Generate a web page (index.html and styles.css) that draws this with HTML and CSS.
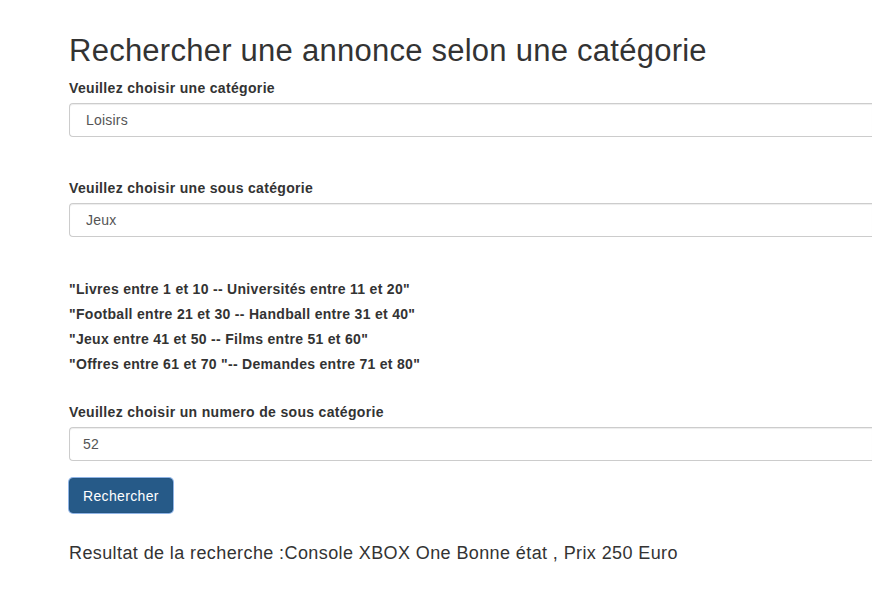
FILE: index.html
```html
<!DOCTYPE html>
<html lang="fr">
<head>
<meta charset="utf-8">
<title>Rechercher une annonce</title>
<link rel="stylesheet" href="styles.css">
</head>
<body>
<main class="page">
  <h2 class="title">Rechercher une annonce selon une catégorie</h2>
  <form class="search-form">
    <div class="group">
      <label class="field-label" for="cat">Veuillez choisir une catégorie</label>
      <select class="control control-select" id="cat">
        <option>Loisirs</option>
      </select>
    </div>
    <div class="group group-sub">
      <label class="field-label" for="subcat">Veuillez choisir une sous catégorie</label>
      <select class="control control-select" id="subcat">
        <option>Jeux</option>
      </select>
    </div>
    <div class="ranges">
      <p>"Livres entre 1 et 10 -- Universités entre 11 et 20"</p>
      <p>"Football entre 21 et 30 -- Handball entre 31 et 40"</p>
      <p>"Jeux entre 41 et 50 -- Films entre 51 et 60"</p>
      <p>"Offres entre 61 et 70 "-- Demandes entre 71 et 80"</p>
    </div>
    <div class="group group-num">
      <label class="field-label" for="num">Veuillez choisir un numero de sous catégorie</label>
      <input class="control" id="num" type="text" value="52">
    </div>
    <button class="btn-primary" type="button">Rechercher</button>
  </form>
  <p class="result">Resultat de la recherche :Console XBOX One Bonne état , Prix 250 Euro</p>
</main>
</body>
</html>
```
FILE: styles.css
```css
html, body {
  margin: 0;
  padding: 0;
  background: #fff;
}
body {
  font-family: "Liberation Sans", Arial, sans-serif;
  font-size: 14px;
  line-height: 20px;
  color: #333;
}
.page {
  padding: 34px 0 0 69px;
}
.title {
  margin: 0 0 11px;
  font-size: 31px;
  font-weight: 400;
  line-height: 33px;
  letter-spacing: 0.25px;
  color: #333;
}
.search-form {
  display: flex;
  flex-direction: column;
  align-items: flex-start;
}
.group {
  display: flex;
  flex-direction: column;
  align-items: flex-start;
}
.group-sub {
  margin-top: 41px;
}
.field-label {
  display: block;
  font-weight: 700;
  font-size: 14px;
  line-height: 20px;
  letter-spacing: 0.33px;
  margin-bottom: 5px;
}
.control {
  box-sizing: border-box;
  width: 803px;
  height: 34px;
  margin: 0;
  padding: 6px 13px;
  font-family: inherit;
  font-size: 14px;
  line-height: 20px;
  letter-spacing: 0.2px;
  color: #555;
  background: #fff;
  border: 1px solid #ccc;
  border-right: 0;
  border-radius: 4px 0 0 4px;
  box-shadow: inset 0 1px 1px rgba(0, 0, 0, .075);
  outline: none;
}
.control-select {
  -webkit-appearance: none;
  appearance: none;
  padding-left: 16px;
}
.ranges {
  margin-top: 40px;
}
.ranges p {
  margin: 0;
  font-weight: 700;
  line-height: 25px;
  letter-spacing: 0.3px;
}
.group-num {
  margin-top: 25px;
}
.btn-primary {
  margin-top: 17px;
  height: 35px;
  padding: 6px 13px;
  font-family: inherit;
  font-size: 14px;
  line-height: 20px;
  letter-spacing: 0.35px;
  color: #fff;
  background: #265a88;
  border: 1px solid #245580;
  border-radius: 4px;
  box-shadow: 0 0 0 1px #8fb4e6;
  cursor: pointer;
}
.result {
  margin: 30px 0 0;
  font-size: 18px;
  line-height: 20px;
  letter-spacing: 0.4px;
  color: #333;
}
```
